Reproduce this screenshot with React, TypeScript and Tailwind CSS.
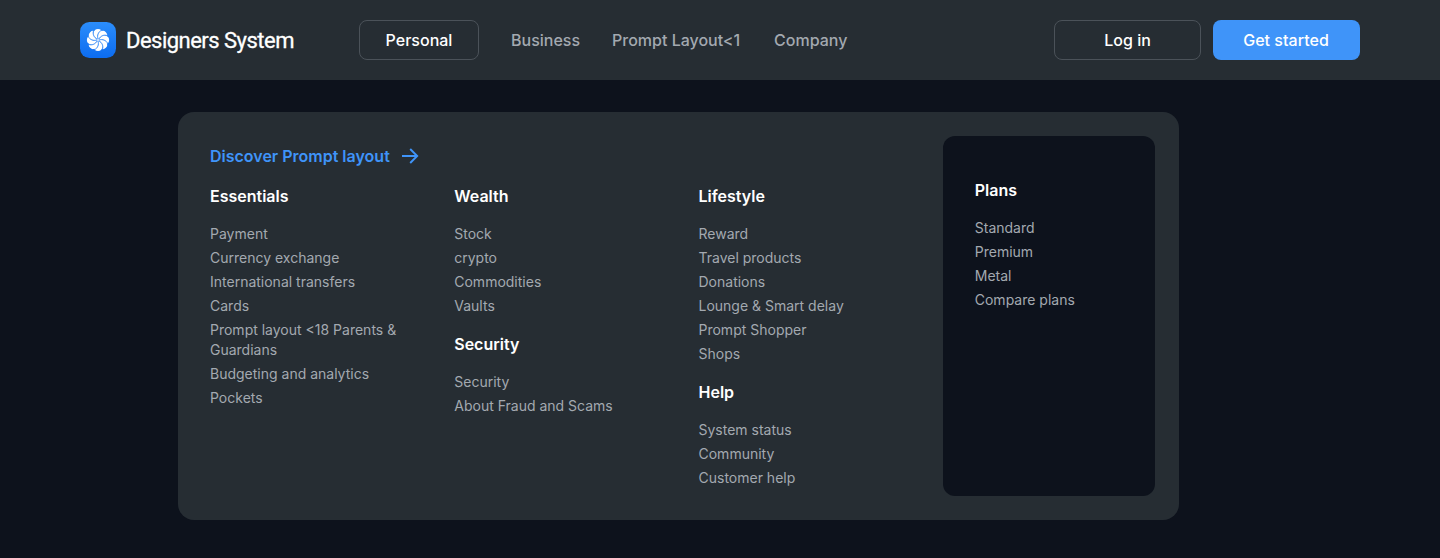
import React from "react";

type Group = { title: string; items: string[] };

const columns: Group[][] = [
  [
    {
      title: "Essentials",
      items: [
        "Payment",
        "Currency exchange",
        "International transfers",
        "Cards",
        "Prompt layout <18 Parents & Guardians",
        "Budgeting and analytics",
        "Pockets",
      ],
    },
  ],
  [
    { title: "Wealth", items: ["Stock", "crypto", "Commodities", "Vaults"] },
    { title: "Security", items: ["Security", "About Fraud and Scams"] },
  ],
  [
    {
      title: "Lifestyle",
      items: ["Reward", "Travel products", "Donations", "Lounge & Smart delay", "Prompt Shopper", "Shops"],
    },
    { title: "Help", items: ["System status", "Community", "Customer help"] },
  ],
];

const plans: Group = { title: "Plans", items: ["Standard", "Premium", "Metal", "Compare plans"] };

const petals = [0, 45, 90, 135, 180, 225, 270, 315];

function Logo() {
  return (
    <svg width="36" height="36" viewBox="0 0 36 36" aria-hidden="true">
      <defs>
        <linearGradient id="tile" x1="0" y1="0" x2="0" y2="1">
          <stop offset="0" stopColor="#2b8dfb" />
          <stop offset="1" stopColor="#0c6cf0" />
        </linearGradient>
      </defs>
      <rect width="36" height="36" rx="9.5" fill="url(#tile)" />
      <circle cx="18" cy="18" r="8.5" fill="#fff" />
      {petals.map((a) => (
        <circle key={a} transform={`rotate(${a} 18 18)`} cx="18" cy="10.9" r="4" fill="#fff" />
      ))}
      {petals.map((a) => (
        <path
          key={a}
          transform={`rotate(${a} 18 18)`}
          d="M18 17C16.9 13.3 18.2 9.9 21.6 8.2"
          fill="none"
          stroke="#1c7cf6"
          strokeWidth="0.9"
        />
      ))}
    </svg>
  );
}

function LinkGroup({ title, items }: Group) {
  return (
    <section>
      <h3 className="text-base leading-6 font-semibold text-white">{title}</h3>
      <ul className="mt-4 flex flex-col gap-1 text-sm leading-5 text-[#a3a9b0]">
        {items.map((item) => (
          <li key={item}>
            <a href="#">{item}</a>
          </li>
        ))}
      </ul>
    </section>
  );
}

export default function App() {
  return (
    <div className="h-[558px] w-[1440px] bg-[#0d121c] font-['Inter',sans-serif]">
      <header className="flex h-20 items-center bg-[#262d33] px-20">
        <a href="#" className="flex w-[279px] items-center gap-2.5">
          <Logo />
          <span className="pt-0.5 font-['Roboto',sans-serif] text-[22px] leading-7 font-normal tracking-[-0.52px] whitespace-nowrap text-white [-webkit-text-stroke:0.3px_white]">
            Designers System
          </span>
        </a>
        <nav className="flex items-center gap-8 text-base font-medium whitespace-nowrap text-[#a3a9b0]">
          <a
            href="#"
            className="flex h-10 w-[120px] items-center justify-center rounded-lg border border-[#4b5259] text-white"
          >
            Personal
          </a>
          <a href="#">Business</a>
          <a href="#">Prompt Layout&lt;1</a>
          <a href="#" className="ml-0.5">Company</a>
        </nav>
        <div className="ml-auto flex gap-3 text-base font-medium tracking-[0.03px] text-white">
          <button className="h-10 w-[147px] rounded-lg border border-[#4b5259]">Log in</button>
          <button className="h-10 w-[147px] rounded-lg bg-[#3f94f9] pr-px">Get started</button>
        </div>
      </header>

      <main className="mt-8 ml-[178px] grid h-[408px] w-[1001px] grid-cols-4 gap-x-8 rounded-2xl bg-[#262d33] py-6 pr-6 pl-8">
        <div className="col-span-3 flex flex-col pt-2">
          <a href="#" className="flex items-center gap-2 text-base leading-6 font-semibold text-[#3f94f9]">
            Discover Prompt layout
            <svg width="24" height="24" viewBox="0 0 24 24" fill="none" stroke="currentColor" strokeWidth="1.9" aria-hidden="true">
              <path d="M4 12H19M12.2 5L19.2 12L12.2 19" />
            </svg>
          </a>
          <div className="mt-4 grid grid-cols-3 gap-x-8">
            {columns.map((groups) => (
              <div key={groups[0].title} className="flex flex-col gap-4">
                {groups.map((group) => (
                  <LinkGroup key={group.title} {...group} />
                ))}
              </div>
            ))}
          </div>
        </div>
        <aside className="rounded-xl bg-[#0d121c] px-8 pt-[42px]">
          <LinkGroup {...plans} />
        </aside>
      </main>
    </div>
  );
}
